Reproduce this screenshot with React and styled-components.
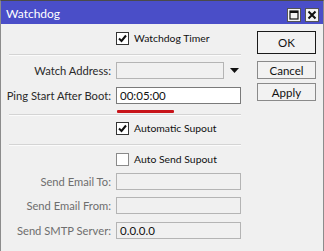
import styled, { createGlobalStyle } from 'styled-components';

const Global = createGlobalStyle`
  html, body {
    margin: 0;
    padding: 0;
    background: #f0f0f0;
  }
  body {
    font-family: Lato, "Liberation Sans", sans-serif;
    font-size: 11.2px;
    color: #1e1e1e;
  }
`;

const Window = styled.div`
  width: 324px;
  height: 251px;
  box-sizing: border-box;
  border-top: 1px solid #4a4a4a;
  border-left: 1px solid #8c8c8c;
  border-right: 1px solid #8c8c8c;
  background: #f0f0f0;
  overflow: hidden;
`;

const TitleBar = styled.div`
  height: 23px;
  background: #4a4ec8;
  display: flex;
  align-items: center;
  padding: 0 4px 0 5px;
  color: #fff;
  font-size: 12px;
`;

const Title = styled.div`
  flex: 1;
  padding-top: 1px;
`;

const TitleButtons = styled.div`
  display: flex;
  gap: 4px;
  margin-top: 4px;
`;

const TitleButton = styled.div`
  width: 12px;
  height: 12px;
  background: #f4f4f4;
  border: 1px solid #555;
  display: flex;
  align-items: center;
  justify-content: center;
`;

const Body = styled.div`
  display: flex;
`;

const Form = styled.div`
  width: 250px;
  display: flex;
  flex-direction: column;
  padding-top: 4px;
`;

const CheckRow = styled.div`
  height: 18px;
  margin-top: ${({ top }) => top}px;
  padding-left: 115px;
  display: flex;
  align-items: center;
  gap: 5px;
  font-size: 10.4px;
  color: #111;
`;

const Box = styled.div`
  width: 11px;
  height: 11px;
  background: #fff;
  border: 1px solid ${({ checked }) => (checked ? '#333' : '#8a8a8a')};
  display: flex;
  align-items: center;
  justify-content: center;
`;

const Separator = styled.div`
  margin: ${({ top }) => top}px 10px 0 8px;
  height: 1px;
  background: #d4d4d4;
  border-bottom: 1px solid #fbfbfb;
`;

const Field = styled.div`
  display: grid;
  grid-template-columns: 110px 125px auto;
  column-gap: 5px;
  align-items: center;
  height: 17px;
  margin-top: ${({ top }) => top}px;
`;

const Label = styled.div`
  text-align: right;
  white-space: nowrap;
  color: ${({ disabled }) => (disabled ? '#6e6e6e' : '#2a2a2a')};
`;

const Input = styled.div`
  box-sizing: border-box;
  height: 17px;
  width: ${({ width }) => width || 125}px;
  background: ${({ disabled }) => (disabled ? '#f0f0f0' : '#fff')};
  border: 1px solid ${({ disabled }) => (disabled ? '#b4b4b4' : '#7a7a7a')};
  padding-left: 3px;
  line-height: 15px;
  font-size: 11.5px;
  color: #111;
`;

const InputWrap = styled.div`
  display: flex;
  align-items: center;
  gap: 6px;
`;

const Underline = styled.div`
  margin: 6px 0 0 116px;
  width: 57px;
  height: 3px;
  border-radius: 1px;
  background: #c8141a;
`;

const Buttons = styled.div`
  display: flex;
  flex-direction: column;
  padding: 7px 0 0 6px;
`;

const Button = styled.div`
  box-sizing: border-box;
  width: 59px;
  height: ${({ primary }) => (primary ? 23 : 18)}px;
  margin-bottom: ${({ primary }) => (primary ? 7 : 4)}px;
  border: 1px solid ${({ primary }) => (primary ? '#1a1a1a' : '#8a8a8a')};
  background: #f2f2f2;
  display: flex;
  align-items: center;
  justify-content: center;
  font-size: 11.5px;
  color: #111;
`;

function Check({ checked }) {
  return (
    <Box checked={checked}>
      {checked && (
        <svg width="9" height="9" viewBox="0 0 9 9">
          <path d="M1 4.5 L3.5 7 L8 1.5" fill="none" stroke="#111" strokeWidth="2" />
        </svg>
      )}
    </Box>
  );
}

export default function App() {
  return (
    <>
      <Global />
      <Window>
        <TitleBar>
          <Title>Watchdog</Title>
          <TitleButtons>
            <TitleButton>
              <svg width="10" height="10" viewBox="0 0 10 10">
                <rect x="1" y="1" width="8" height="8" fill="none" stroke="#111" strokeWidth="1.2" />
                <rect x="1" y="1" width="8" height="2" fill="#111" />
              </svg>
            </TitleButton>
            <TitleButton>
              <svg width="10" height="10" viewBox="0 0 10 10">
                <path d="M1.5 1.5 L8.5 8.5 M8.5 1.5 L1.5 8.5" stroke="#111" strokeWidth="2" />
              </svg>
            </TitleButton>
          </TitleButtons>
        </TitleBar>
        <Body>
          <Form>
            <CheckRow top={1}>
              <Check checked />
              Watchdog Timer
            </CheckRow>
            <Separator top={7} />
            <Field top={6}>
              <Label>Watch Address:</Label>
              <InputWrap>
                <Input disabled width={108} />
                <svg width="9" height="5" viewBox="0 0 9 5">
                  <path d="M0 0 H9 L4.5 5 Z" fill="#111" />
                </svg>
              </InputWrap>
            </Field>
            <Field top={8}>
              <Label>Ping Start After Boot:</Label>
              <Input>00:05:00</Input>
            </Field>
            <Underline />
            <Separator top={1} />
            <CheckRow top={3}>
              <Check checked />
              Automatic Supout
            </CheckRow>
            <Separator top={7} />
            <CheckRow top={4}>
              <Check />
              Auto Send Supout
            </CheckRow>
            <Field top={5}>
              <Label disabled>Send Email To:</Label>
              <Input disabled />
            </Field>
            <Field top={7}>
              <Label disabled>Send Email From:</Label>
              <Input disabled />
            </Field>
            <Field top={8}>
              <Label disabled>Send SMTP Server:</Label>
              <Input disabled>0.0.0.0</Input>
            </Field>
          </Form>
          <Buttons>
            <Button primary>OK</Button>
            <Button>Cancel</Button>
            <Button>Apply</Button>
          </Buttons>
        </Body>
      </Window>
    </>
  );
}
